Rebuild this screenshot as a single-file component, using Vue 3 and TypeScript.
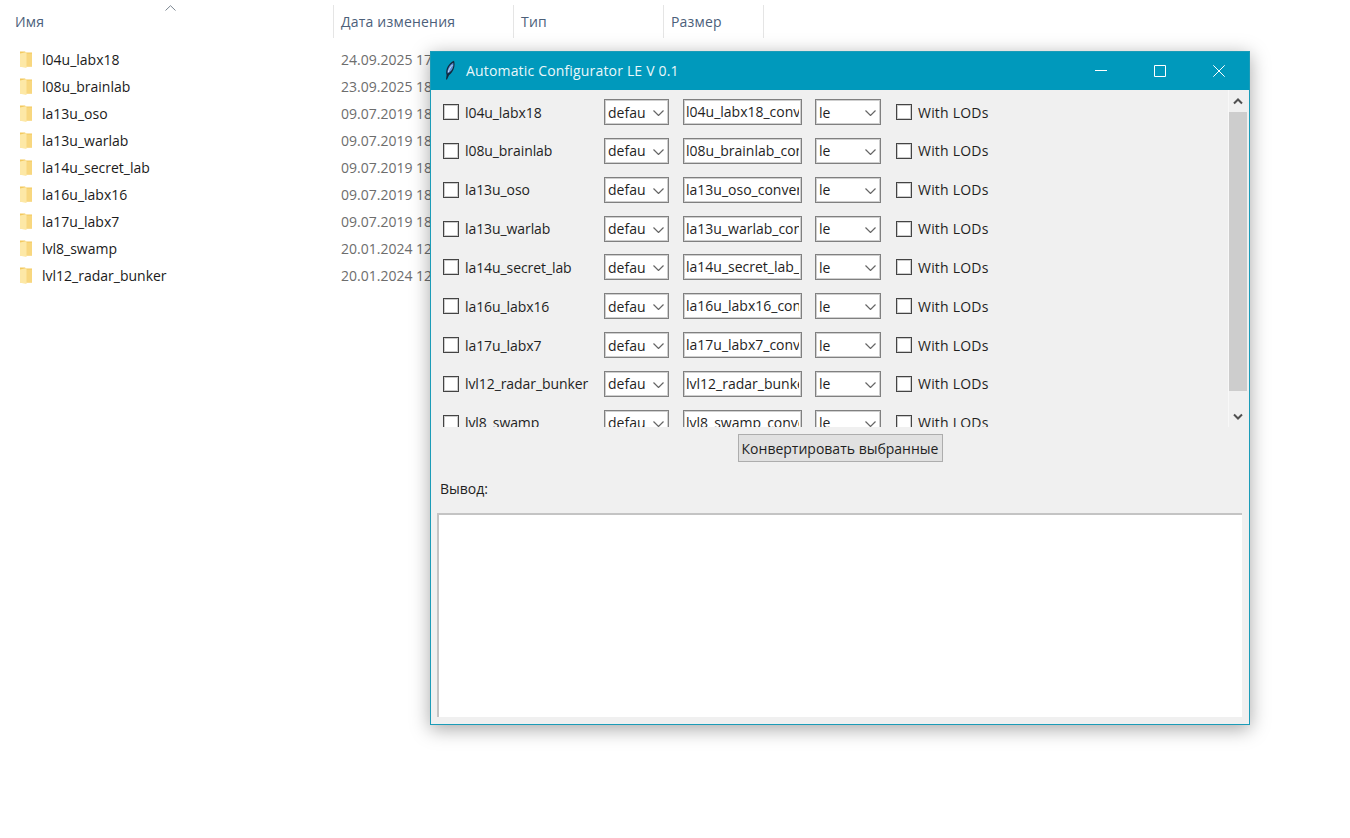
<script setup lang="ts">
const folders: { name: string; date: string }[] = [
  { name: 'l04u_labx18', date: '24.09.2025 17:12' },
  { name: 'l08u_brainlab', date: '23.09.2025 18:40' },
  { name: 'la13u_oso', date: '09.07.2019 18:05' },
  { name: 'la13u_warlab', date: '09.07.2019 18:05' },
  { name: 'la14u_secret_lab', date: '09.07.2019 18:05' },
  { name: 'la16u_labx16', date: '09.07.2019 18:05' },
  { name: 'la17u_labx7', date: '09.07.2019 18:05' },
  { name: 'lvl8_swamp', date: '20.01.2024 12:30' },
  { name: 'lvl12_radar_bunker', date: '20.01.2024 12:30' },
]
const levels: string[] = [
  'l04u_labx18', 'l08u_brainlab', 'la13u_oso', 'la13u_warlab', 'la14u_secret_lab',
  'la16u_labx16', 'la17u_labx7', 'lvl12_radar_bunker', 'lvl8_swamp',
]
const columns = [
  { label: 'Имя', width: 334 },
  { label: 'Дата изменения', width: 180 },
  { label: 'Тип', width: 150 },
  { label: 'Размер', width: 100 },
]
</script>

<template>
  <div class="desktop">
    <section class="explorer">
      <header class="cols">
        <div v-for="c in columns" :key="c.label" class="col" :style="{ width: c.width + 'px' }">{{ c.label }}</div>
        <svg class="sort" width="11" height="6" viewBox="0 0 11 6"><path d="M.5 5.500 5.500.7l5 4.800" fill="none" stroke="#7b8590" /></svg>
      </header>
      <ul class="files">
        <li v-for="f in folders" :key="f.name" class="file">
          <svg class="folder" width="16" height="18" viewBox="0 0 16 18">
            <path d="M2 .5h5l1 1h6v14H2z" fill="#f3c95f" />
            <path d="M8 2.500h6v13H8z" fill="#f8d77f" />
            <path d="M2 2.500 8.500 1V17L3.500 16 2 15z" fill="#fde8a6" />
          </svg>
          <span class="fname">{{ f.name }}</span>
          <span class="fdate">{{ f.date }}</span>
        </li>
      </ul>
    </section>

    <section class="win">
      <div class="titlebar">
        <svg class="feather" width="16" height="20" viewBox="0 0 16 20">
          <path d="M4 19.500 4.600 15C3 10 6.500 3 12 .8 13.500 5.500 12 11.500 7 15.200L5 19.500z" fill="#12283c" />
          <path d="M5.600 13.500C4.800 9.500 7.500 5 11.200 2.800 12 6.500 10.500 11 5.600 13.500z" fill="#5c8fd6" />
          <path d="M6.300 12C7.300 8.800 8.800 6.500 10.500 5" fill="none" stroke="#d6e6f7" stroke-width=".9" />
        </svg>
        <span class="title">Automatic Configurator LE V 0.1</span>
        <div class="controls">
          <svg width="12" height="12" viewBox="0 0 12 12"><path d="M0 5.500h12" stroke="#fff" /></svg>
          <svg width="12" height="12" viewBox="0 0 12 12"><path d="M.5.5h11v11H.5z" fill="none" stroke="#fff" /></svg>
          <svg width="12" height="12" viewBox="0 0 12 12"><path d="M.3.3l11.400 11.400m0-11.400L.3 11.700" stroke="#fff" /></svg>
        </div>
      </div>
      <div class="body">
        <div class="listwrap">
          <div class="list">
            <div v-for="l in levels" :key="l" class="row">
              <span class="check"></span>
              <span class="lname">{{ l }}</span>
              <div class="combo c1">
                <span class="ctext">default</span>
                <svg class="chev" width="11" height="6" viewBox="0 0 11 6"><path d="M.5.5l5 5 5-5" fill="none" stroke="#666" stroke-width="1.2" /></svg>
              </div>
              <div class="entry"><span class="etext">{{ l }}_converted</span></div>
              <div class="combo c2">
                <span class="ctext">le</span>
                <svg class="chev" width="11" height="6" viewBox="0 0 11 6"><path d="M.5.5l5 5 5-5" fill="none" stroke="#666" stroke-width="1.2" /></svg>
              </div>
              <span class="check check2"></span>
              <span class="lods">With LODs</span>
            </div>
          </div>
          <div class="scrollbar">
            <svg class="arrow" width="10" height="7" viewBox="0 0 10 7"><path d="M1 5.500 5 1.500l4 4" fill="none" stroke="#505050" stroke-width="2" /></svg>
            <div class="track"><div class="thumb"></div></div>
            <svg class="arrow" width="10" height="7" viewBox="0 0 10 7"><path d="M1 1.500l4 4 4-4" fill="none" stroke="#505050" stroke-width="2" /></svg>
          </div>
        </div>
        <div class="actions"><button class="convert" type="button">Конвертировать выбранные</button></div>
        <div class="outlabel">Вывод:</div>
        <div class="output"></div>
      </div>
    </section>
  </div>
</template>

<style>
html, body { margin: 0; background: #fff; }
</style>

<style scoped>
.desktop {
  position: relative;
  width: 1350px;
  height: 838px;
  overflow: hidden;
  background: #fff;
  font-family: "Open Sans", "Noto Sans", sans-serif;
}
.explorer { padding-top: 5px; }
.cols { display: flex; height: 33px; position: relative; }
.col {
  box-sizing: border-box;
  padding: 7px 0 0 7px;
  font-size: 14px;
  line-height: 19px;
  letter-spacing: .2px;
  color: #4c607a;
  border-right: 1px solid #e5e5e5;
}
.col:first-child { padding-left: 15px; }
.sort { position: absolute; left: 165px; top: 0; }
.files { list-style: none; margin: 8px 0 0; padding: 0; }
.file { display: flex; align-items: center; height: 27px; }
.folder { margin-left: 18px; flex: none; }
.fname { width: 299px; margin-left: 8px; font-size: 14px; color: #1b1b1b; white-space: nowrap; }
.fdate { font-size: 14px; color: #6d6d6d; white-space: nowrap; }

.win {
  position: absolute;
  left: 430px;
  top: 51px;
  width: 820px;
  height: 674px;
  box-sizing: border-box;
  border: 1px solid #1b9cb8;
  background: #f0f0f0;
  box-shadow: 0 4px 18px rgba(0, 0, 0, .35);
  display: flex;
  flex-direction: column;
}
.titlebar {
  flex: none;
  box-sizing: border-box;
  height: 38px;
  padding: 0 0 2px 11px;
  background: #0099bc;
  display: flex;
  align-items: center;
  color: #fff;
}
.feather { flex: none; }
.title { margin-left: 8px; font-size: 14px; letter-spacing: .17px; color: #eaf7fa; }
.controls {
  margin: 1px 0 0 auto;
  display: flex;
  align-items: center;
  gap: 47px;
  padding-right: 24px;
}
.body { flex: 1; display: flex; flex-direction: column; min-height: 0; }
.listwrap { flex: none; height: 337px; display: flex; overflow: hidden; }
.list { flex: 1; padding: 9px 0 0 12px; min-width: 0; }
.row { display: flex; align-items: center; height: 26px; margin-bottom: 12.85px; font-size: 14px; color: #1f1f1f; }
.check {
  flex: none;
  box-sizing: border-box;
  width: 16px;
  height: 16px;
  border: 1px solid #444;
  background: #fff;
  box-shadow: inset 0 0 0 1px #ccc;
}
.check2 { margin-left: 15px; }
.lname { width: 139px; margin-left: 6px; white-space: nowrap; flex: none; letter-spacing: -.08px; }
.combo {
  flex: none;
  box-sizing: border-box;
  height: 26px;
  background: #fff;
  border: 1px solid #808080;
  box-shadow: inset 0 0 0 1px #cfcfcf;
  display: flex;
  align-items: center;
  position: relative;
  overflow: hidden;
  padding-left: 3px;
}
.c1 { width: 65px; }
.c2 { width: 66px; margin-left: 13px; }
.ctext { display: block; width: 38px; overflow: hidden; white-space: nowrap; }
.chev { position: absolute; right: 4px; top: 10px; }
.entry {
  flex: none;
  box-sizing: border-box;
  width: 119px;
  height: 26px;
  margin-left: 14px;
  background: #fff;
  border: 1px solid #808080;
  box-shadow: inset 0 0 0 1px #cfcfcf;
  padding: 0 2px;
  line-height: 24px;
}
.etext { display: block; overflow: hidden; white-space: nowrap; }
.lods { margin-left: 6px; white-space: nowrap; letter-spacing: .2px; }
.scrollbar {
  flex: none;
  width: 19px;
  margin-right: 2px;
  display: flex;
  flex-direction: column;
  align-items: center;
  border-left: 1px solid #f8f8f8;
  box-sizing: border-box;
}
.arrow { flex: none; margin: 8px 0 7px; }
.track { flex: 1; width: 100%; }
.thumb { width: 100%; height: 279px; background: #cdcdcd; }
.actions { flex: none; height: 43px; display: flex; justify-content: center; align-items: center; padding-bottom: 1px; box-sizing: border-box; }
.convert {
  box-sizing: border-box;
  width: 205px;
  height: 28px;
  padding: 0;
  border: 1px solid #adadad;
  background: #e1e1e1;
  font: inherit;
  font-size: 14px;
  color: #1f1f1f;
}
.outlabel { margin: 9px 0 0 9px; height: 20px; font-size: 14px; line-height: 20px; color: #1f1f1f; }
.output {
  flex: none;
  margin: 14px 7px 0 6px;
  height: 204px;
  box-sizing: border-box;
  background: #fff;
  border-top: 2px solid #c4c4c4;
  border-left: 2px solid #c4c4c4;
}
</style>
